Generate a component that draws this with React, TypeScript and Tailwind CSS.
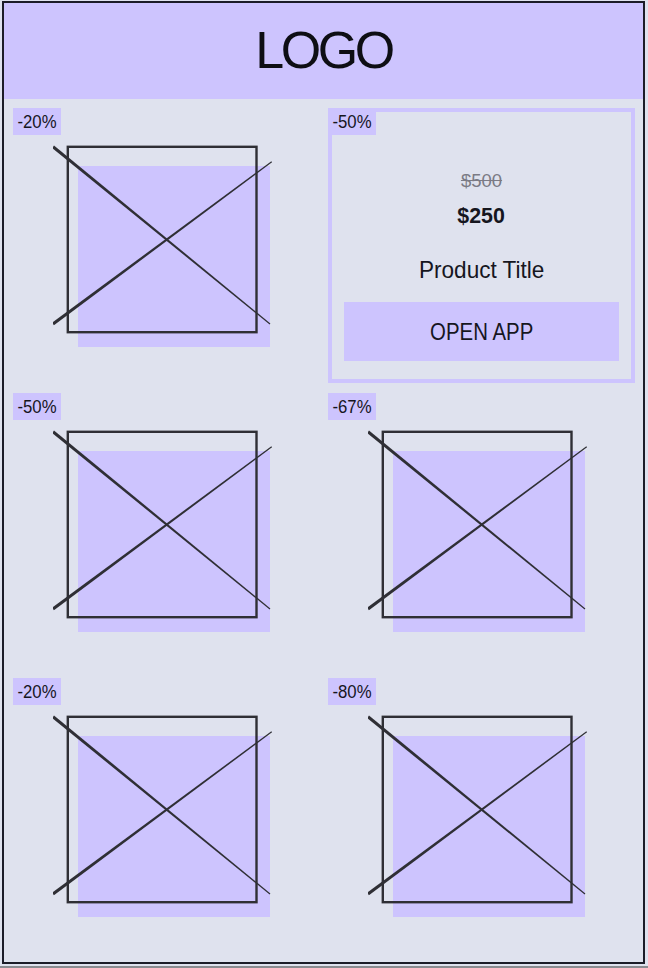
import React from "react";

const taper = (
  ax: number,
  ay: number,
  bx: number,
  by: number,
  w1: number,
  w2: number
) => {
  const dx = bx - ax;
  const dy = by - ay;
  const len = Math.hypot(dx, dy);
  const nx = -dy / len;
  const ny = dx / len;
  const p = [
    [ax + (nx * w1) / 2, ay + (ny * w1) / 2],
    [bx + (nx * w2) / 2, by + (ny * w2) / 2],
    [bx - (nx * w2) / 2, by - (ny * w2) / 2],
    [ax - (nx * w1) / 2, ay - (ny * w1) / 2],
  ];
  return p.map((q) => q.map((v) => v.toFixed(2)).join(",")).join(" ");
};

function Placeholder() {
  return (
    <svg width="220" height="203" viewBox="0 0 220 203" className="ml-[40px] mt-[10px] block">
      <rect x="25" y="21" width="192" height="181" fill="#cdc4fe" />
      <rect
        x="14.8"
        y="1.8"
        width="188.7"
        height="185.4"
        fill="none"
        stroke="#2f2f35"
        strokeWidth="2.4"
      />
      <polygon points={taper(0, 1.7, 217, 179, 3.2, 1.2)} fill="#2f2f35" />
      <polygon points={taper(0, 179, 218.7, 16.7, 3.2, 1.2)} fill="#2f2f35" />
    </svg>
  );
}

function Badge({ text }: { text: string }) {
  return (
    <div className="h-[27px] w-[48px] bg-[#cdc4fe] text-center text-[18px] leading-[27px] pt-px text-[#16161e]">
      <span className="inline-block scale-x-[0.93]">{text}</span>
    </div>
  );
}

function ImageCard({ badge }: { badge: string }) {
  return (
    <div className="h-[275px] flex flex-col">
      <Badge text={badge} />
      <Placeholder />
    </div>
  );
}

function FeaturedCard() {
  return (
    <div className="relative h-[275px] border-4 border-[#cdc4fe] flex flex-col items-center px-[12px] pt-[60px] text-[#16161e]">
      <div className="absolute -top-[4px] -left-[4px]">
        <Badge text="-50%" />
      </div>
      <div className="text-[18.5px] leading-none text-[#7b7b85] line-through">$500</div>
      <div className="mt-[14px] text-[22.5px] leading-none font-bold">
        <span className="inline-block scale-x-[0.95]">$250</span>
      </div>
      <div className="mt-[31px] text-[24px] leading-none">
        <span className="inline-block scale-x-[0.94]">Product Title</span>
      </div>
      <button className="mt-[20px] self-stretch h-[59px] bg-[#cdc4fe] text-[24px] leading-none text-[#16161e]">
        <span className="inline-block scale-x-[0.85]">OPEN APP</span>
      </button>
    </div>
  );
}

export default function App() {
  return (
    <div
      className="min-h-[968px] h-[968px] bg-[#dfe2ee] flex flex-col"
      style={{ fontFamily: "'Liberation Sans', Arial, sans-serif" }}
    >
      <div className="ml-[2px] mt-[1px] w-[643px] h-[963px] border-2 border-[#1c1c28] flex flex-col">
        <header className="h-[96px] bg-[#cdc4fe] flex items-center justify-center pb-[3px]">
          <span className="text-[52px] leading-none tracking-[-3.5px] text-[#0e0e14]">LOGO</span>
        </header>
        <div className="grid grid-cols-2 gap-x-[8px] gap-y-[10px] pl-[9px] pr-[8px] pt-[9px]">
          <ImageCard badge="-20%" />
          <FeaturedCard />
          <ImageCard badge="-50%" />
          <ImageCard badge="-67%" />
          <ImageCard badge="-20%" />
          <ImageCard badge="-80%" />
        </div>
      </div>
      <div className="mt-auto h-[2px] bg-[#8a8b90]" />
    </div>
  );
}
